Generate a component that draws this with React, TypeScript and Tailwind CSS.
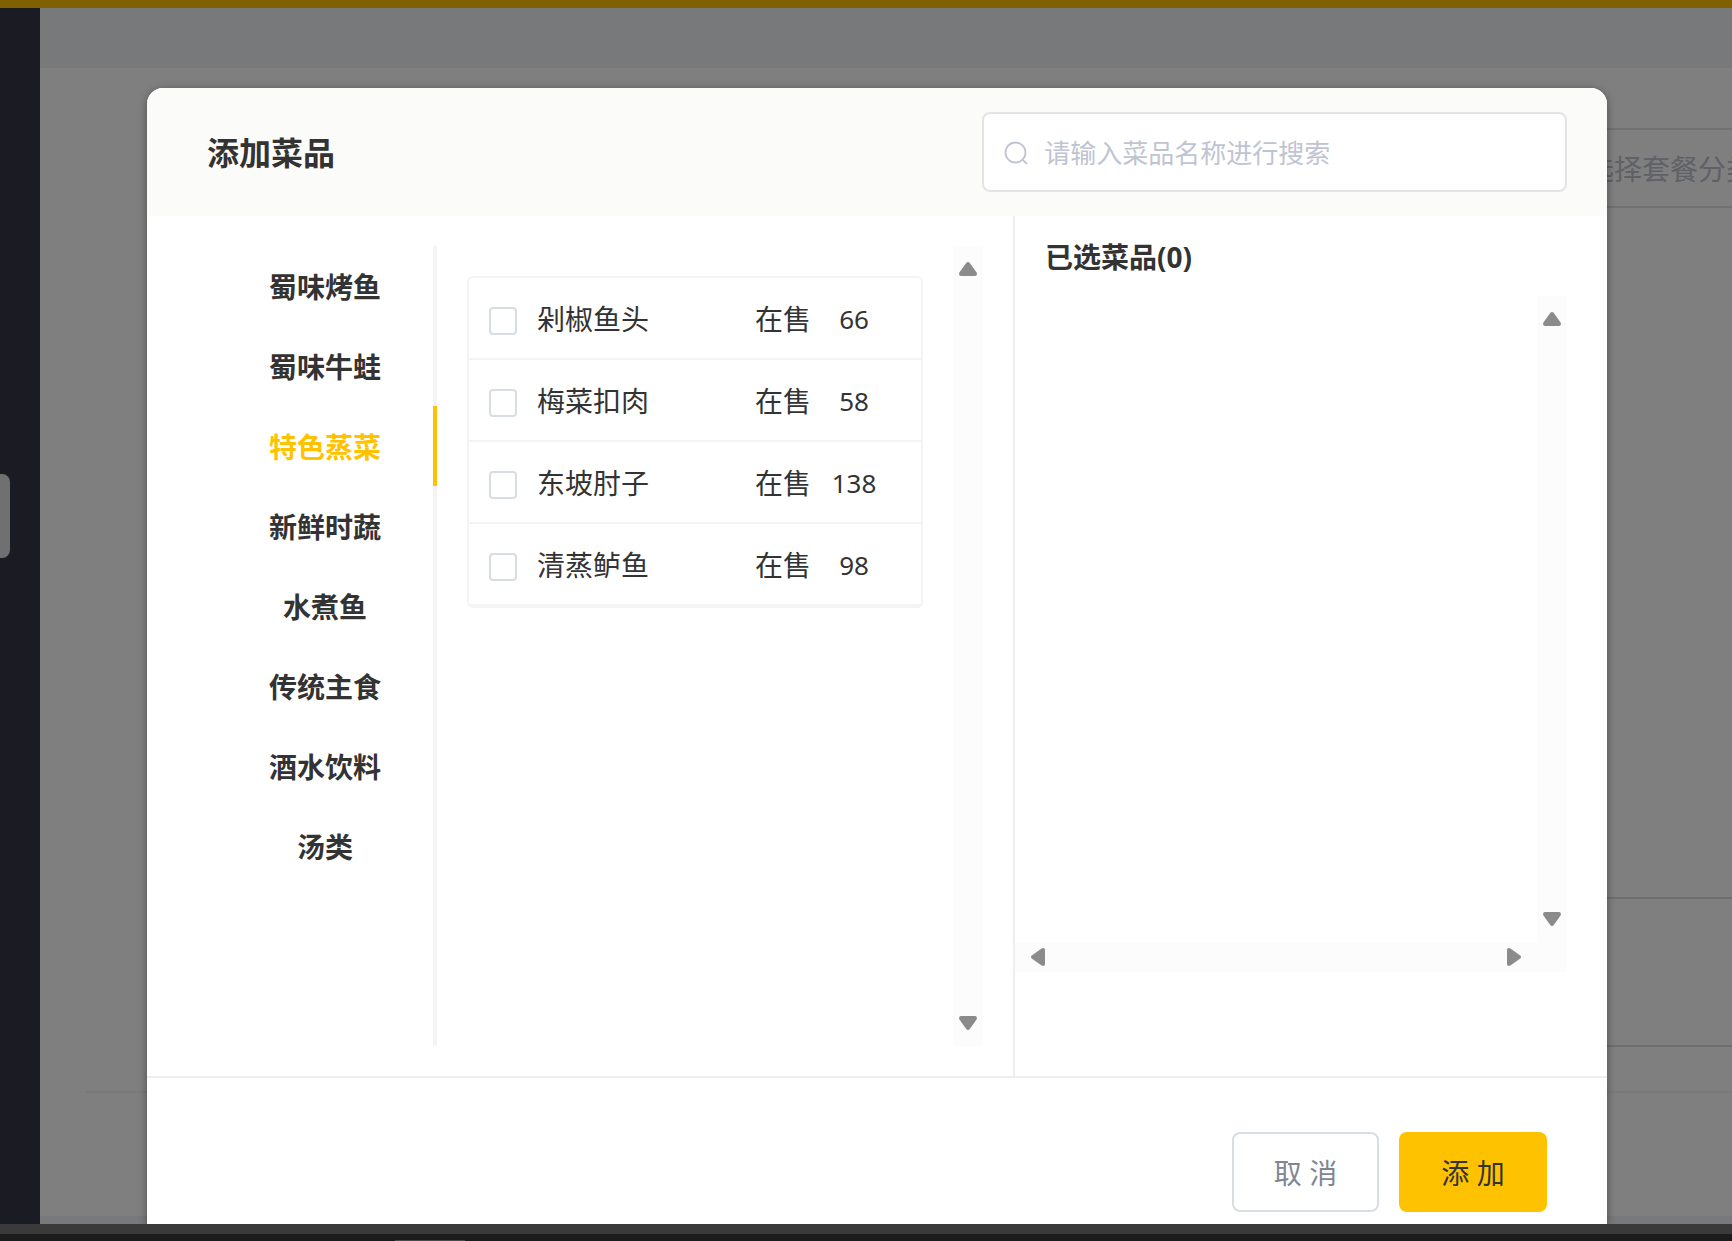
import { useState } from "react";
import clsx from "clsx";

const categories = [
    "蜀味烤鱼",
    "蜀味牛蛙",
    "特色蒸菜",
    "新鲜时蔬",
    "水煮鱼",
    "传统主食",
    "酒水饮料",
    "汤类",
];

const dishes = [
    { id: 1, name: "剁椒鱼头", status: "在售", price: 66 },
    { id: 2, name: "梅菜扣肉", status: "在售", price: 58 },
    { id: 3, name: "东坡肘子", status: "在售", price: 138 },
    { id: 4, name: "清蒸鲈鱼", status: "在售", price: 98 },
];

const arrowRotation = {
    up: "",
    right: "rotate-90",
    down: "rotate-180",
    left: "-rotate-90",
};

function ScrollArrow({ direction }: { direction: keyof typeof arrowRotation }) {
    return (
        <svg viewBox="0 0 18 18" className={clsx("h-[18px] w-[18px]", arrowRotation[direction])} aria-hidden="true">
            <path
                d="M7.2 3.1Q9 .9 10.8 3.1L17.6 12.6Q18.6 16 16 16H2Q-.6 16 .4 12.6Z"
                fill="#8b8b8b"
            />
        </svg>
    );
}

function VerticalScrollbar() {
    return (
        <div className="flex w-[30px] flex-col items-center justify-between bg-[#fcfcfc] py-[14px]">
            <ScrollArrow direction="up" />
            <ScrollArrow direction="down" />
        </div>
    );
}

function SearchIcon() {
    return (
        <svg viewBox="0 0 24 24" className="h-6 w-6 shrink-0" fill="none" stroke="#bfc4d2" strokeWidth="1.8" aria-hidden="true">
            <circle cx="11.5" cy="11.5" r="10" />
            <path d="M18.8 18.8L23 23" />
        </svg>
    );
}

// Set-meal form that stays visible around the dialog
function PageBehind() {
    return (
        <div className="col-start-1 row-start-1 flex min-w-0 flex-col overflow-hidden">
            <div className="h-2 bg-[#ffc200]" />
            <div className="flex flex-1">
                <aside className="flex w-10 items-center bg-[#363648]">
                    <div className="mb-[200px] h-[84px] w-[10px] rounded-r-lg bg-[#e0e0e0]" />
                </aside>
                <main className="flex min-w-0 flex-1 flex-col bg-[#f1f2f5] pt-[60px] pb-2">
                    <div className="flex flex-1 flex-col bg-white pt-[60px]">
                        <select
                            aria-label="套餐分类"
                            className="-mr-20 ml-auto h-20 w-[300px] appearance-none rounded-lg border-2 border-[#e2e2e6] pt-0.5 pl-11 text-[28px] leading-10 text-[#bfc2cc]"
                        >
                            <option>请选择套餐分类</option>
                        </select>
                        <div className="flex flex-1 flex-col justify-end">
                            <textarea
                                aria-label="套餐描述"
                                className="-mr-20 ml-[200px] h-[150px] resize-none rounded-lg border-2 border-[#dcdce4]"
                            />
                        </div>
                        <div className="mt-11 mb-[123px] ml-[46px] h-0.5 bg-[#f3f3f3]" />
                    </div>
                </main>
            </div>
        </div>
    );
}

export default function App() {
    const [active, setActive] = useState(2);
    const [selected, setSelected] = useState<number[]>([]);

    const toggle = (id: number) => {
        setSelected(selected.includes(id) ? selected.filter((s) => s !== id) : [...selected, id]);
    };

    return (
        <div className="flex min-h-screen flex-col bg-[#1b1b1b] font-['Noto_Sans','Noto_Sans_CJK_SC',sans-serif] text-[28px] leading-10 text-[#333]">
            <div className="grid flex-1 grid-cols-1 overflow-hidden">
                <PageBehind />

                <div className="z-10 col-start-1 row-start-1 flex flex-col bg-black/50 pt-[88px] pr-[125px] pl-[147px]">
                    <div
                        role="dialog"
                        aria-labelledby="dialog-title"
                        className="flex flex-1 flex-col overflow-hidden rounded-t-2xl bg-white shadow-[0_2px_8px_rgba(0,0,0,0.4)]"
                    >
                        <header className="flex h-32 items-center justify-between bg-[#fbfbf9] pr-10 pl-[60px]">
                            <h2 id="dialog-title" className="pt-0.5 text-[32px] font-bold">添加菜品</h2>
                            <label className="flex h-20 w-[43%] items-center gap-4 rounded-lg border-2 border-[#e4e4e4] bg-white px-5 pt-0.5">
                                <SearchIcon />
                                <input
                                    type="text"
                                    aria-label="搜索菜品"
                                    placeholder="请输入菜品名称进行搜索"
                                    className="min-w-0 flex-1 text-[26px] leading-10 outline-none placeholder:text-[#bfc4d2]"
                                />
                            </label>
                        </header>

                        <div className="grid flex-1 grid-cols-[866fr_594fr]">
                            <section className="flex py-[30px] pr-[30px]">
                                <nav className="flex w-[290px] flex-col pl-[70px]">
                                    {categories.map((category, index) => (
                                        <button
                                            key={category}
                                            type="button"
                                            onClick={() => setActive(index)}
                                            className={clsx(
                                                "h-20 border-r-4 pt-0.5 text-center font-bold",
                                                index === active ? "border-[#ffc200] text-[#ffc200]" : "border-[#f4f4f4]"
                                            )}
                                        >
                                            {category}
                                        </button>
                                    ))}
                                    <div className="flex-1 border-r-4 border-[#f4f4f4]" />
                                </nav>

                                <div className="min-w-0 flex-1 p-[30px]">
                                    <ul className="rounded-md border-2 border-[#f4f4f4]">
                                        {dishes.map((dish) => (
                                            <li key={dish.id} className="border-b-2 border-[#f4f4f4]">
                                                <label className="flex h-20 items-center pt-0.5 pr-6 pl-5">
                                                    <input
                                                        type="checkbox"
                                                        checked={selected.includes(dish.id)}
                                                        onChange={() => toggle(dish.id)}
                                                        className="mt-1 mr-5 h-7 w-7 appearance-none rounded-sm border-2 border-[#d8dde4] bg-white checked:border-[#ffc200] checked:bg-[#ffc200]"
                                                    />
                                                    <span className="flex-1">{dish.name}</span>
                                                    <span>{dish.status}</span>
                                                    <span className="w-[86px] text-center text-[26px]">{dish.price}</span>
                                                </label>
                                            </li>
                                        ))}
                                    </ul>
                                </div>
                                <VerticalScrollbar />
                            </section>

                            <section className="flex flex-col border-l-2 border-[#eee] pr-10 pb-[104px]">
                                <h3 className="flex h-20 items-center pt-0.5 pl-[30px] font-bold">
                                    已选菜品({selected.length})
                                </h3>
                                <div className="flex flex-1">
                                    <div className="flex-1" />
                                    <VerticalScrollbar />
                                </div>
                                <div className="flex h-[30px] items-center justify-between bg-[#fcfcfc] pr-11 pl-[14px]">
                                    <ScrollArrow direction="left" />
                                    <ScrollArrow direction="right" />
                                </div>
                            </section>
                        </div>

                        <footer className="flex justify-end gap-5 border-t-2 border-[#eee] pt-[54px] pr-[60px] pb-3">
                            <button type="button" className="h-20 w-[147px] rounded-lg border-2 border-[#d8dde4] pt-0.5 text-[#818693]">
                                取 消
                            </button>
                            <button type="button" className="h-20 w-[148px] rounded-lg bg-[#ffc200] pt-0.5">
                                添 加
                            </button>
                        </footer>
                    </div>
                </div>
            </div>

            <div className="h-[10px] bg-[#3a3a3a]" />
            <div className="flex h-[7px] items-end">
                <div className="ml-[395px] h-px w-[70px] bg-[#4a4a4a]" />
            </div>
        </div>
    );
}
